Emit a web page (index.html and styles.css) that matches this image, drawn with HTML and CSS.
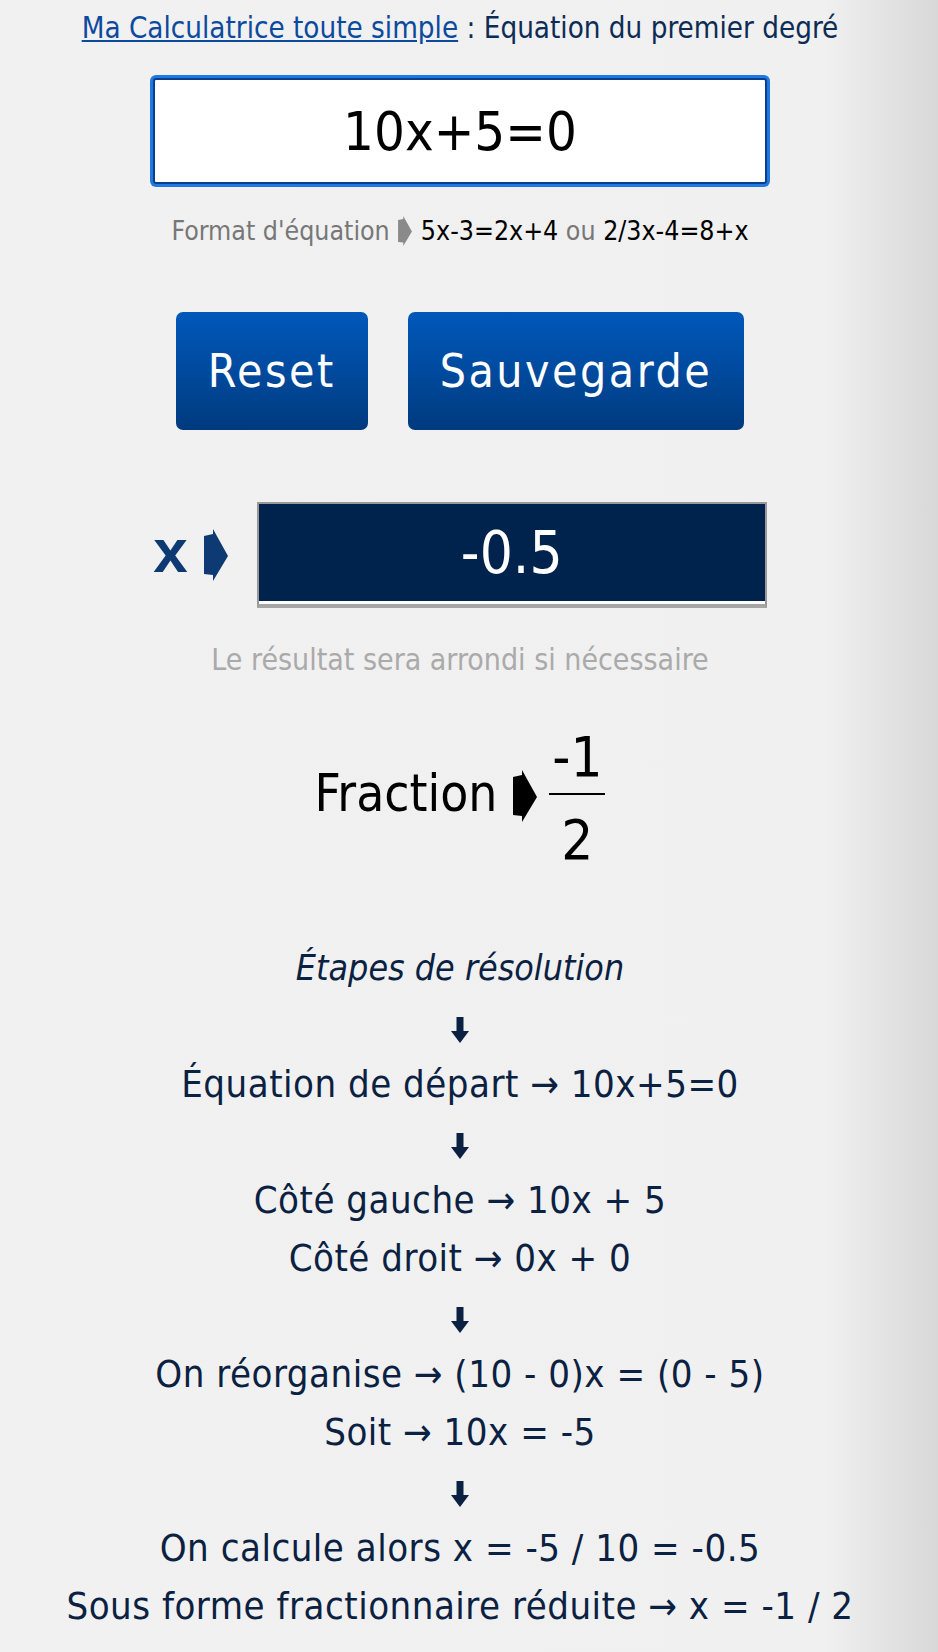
FILE: index.html
```html
<!DOCTYPE html>
<html>
    <head>
        <meta charset="utf-8">
        <title>Équation du premier degré</title>
        <link rel="stylesheet" href="styles.css">
    </head>
    <body>
        <div class="page">
            <h1 class="title"><a href="#">Ma Calculatrice toute simple</a> : Équation du premier degré</h1>

            <input class="equation" type="text" value="10x+5=0">

            <p class="format">
                Format d'équation
                <svg class="arrow arrow-small" viewBox="0 0 24 52"><polygon points="0,7 9,5 9,0 24,27 9,52 9,46 0,45"/></svg>
                <span class="sample">5x-3=2x+4</span> ou <span class="sample">2/3x-4=8+x</span>
            </p>

            <div class="buttons">
                <button class="btn">Reset</button>
                <button class="btn">Sauvegarde</button>
            </div>

            <div class="result-row">
                <span class="result-label">x</span>
                <svg class="arrow arrow-result" viewBox="0 0 24 52"><polygon points="0,7 9,5 9,0 24,27 9,52 9,46 0,45"/></svg>
                <div class="result-box">-0.5</div>
            </div>

            <p class="note">Le résultat sera arrondi si nécessaire</p>

            <div class="fraction-row">
                <span class="fraction-label">Fraction</span>
                <svg class="arrow arrow-fraction" viewBox="0 0 24 52"><polygon points="0,7 9,5 9,0 24,27 9,52 9,46 0,45"/></svg>
                <span class="fraction">
                    <span class="num">-1</span>
                    <span class="den">2</span>
                </span>
            </div>

            <h2 class="steps-title">Étapes de résolution</h2>

            <div class="steps">
                <svg class="down" viewBox="0 0 18 26"><polygon points="5.5,0 12.5,0 12.5,14 18,14 9,26 0,14 5.5,14"/></svg>
                <p>Équation de départ → 10x+5=0</p>

                <svg class="down" viewBox="0 0 18 26"><polygon points="5.5,0 12.5,0 12.5,14 18,14 9,26 0,14 5.5,14"/></svg>
                <p>Côté gauche → 10x + 5</p>
                <p>Côté droit → 0x + 0</p>

                <svg class="down" viewBox="0 0 18 26"><polygon points="5.5,0 12.5,0 12.5,14 18,14 9,26 0,14 5.5,14"/></svg>
                <p>On réorganise → (10 - 0)x = (0 - 5)</p>
                <p>Soit → 10x = -5</p>

                <svg class="down" viewBox="0 0 18 26"><polygon points="5.5,0 12.5,0 12.5,14 18,14 9,26 0,14 5.5,14"/></svg>
                <p>On calcule alors x = -5 / 10 = -0.5</p>
                <p>Sous forme fractionnaire réduite → x = -1 / 2</p>
            </div>
        </div>
    </body>
</html>
```

FILE: styles.css
```css
html, body {
    margin: 0;
    min-height: 100%;
}

body {
    font-family: "Liberation Sans Narrow", "DejaVu Sans Condensed", "Liberation Sans", sans-serif;
    background: linear-gradient(to right, #f1f1f1 0%, #f0f0f0 88%, #d8d8d8 100%);
    min-height: 1652px;
}

.page {
    width: 920px;
    text-align: center;
    padding-top: 8px;
}

.title {
    margin: 0;
    font-size: 29.3px;
    font-weight: normal;
    line-height: 40px;
    color: #0d2c55;
}

.title a {
    color: #0c4a9e;
    text-decoration: underline;
}

.equation {
    display: block;
    box-sizing: border-box;
    width: 614px;
    height: 106px;
    margin: 30px auto 0;
    border: 2px solid #0b3f8c;
    border-radius: 3px;
    box-shadow: 0 0 0 3px #1e7ae2;
    background: #fff;
    font-family: inherit;
    font-size: 54px;
    text-align: center;
    color: #000;
    outline: none;
}

.format {
    margin: 27px 0 0;
    font-size: 26.5px;
    line-height: 40px;
    color: #777;
}

.sample {
    color: #000;
}

.arrow {
    display: inline-block;
}

.arrow-small {
    width: 16px;
    height: 30px;
    fill: #8a8a8a;
    vertical-align: -6px;
}

.buttons {
    display: flex;
    justify-content: center;
    gap: 40px;
    margin-top: 61px;
}

.btn {
    height: 118px;
    padding: 0 32px;
    border: none;
    border-radius: 7px;
    background: linear-gradient(to bottom, #0058b9 0%, #004a9e 50%, #003a7e 100%);
    color: #fff;
    font-family: inherit;
    font-size: 46px;
    letter-spacing: 2.5px;
    cursor: pointer;
}

.result-row {
    display: flex;
    justify-content: center;
    align-items: center;
    margin-top: 72px;
}

.result-label {
    font-family: "Liberation Sans", sans-serif;
    font-weight: bold;
    font-size: 62px;
    line-height: 60px;
    color: #0d3a73;
    margin-top: -8px;
}

.arrow-result {
    width: 24px;
    height: 52px;
    fill: #0d3a73;
    margin: 0 29px 0 16px;
}

.result-box {
    box-sizing: border-box;
    width: 510px;
    height: 106px;
    border: 2px solid #999;
    border-bottom: 4px solid #a5a5a5;
    box-shadow: inset 0 -3px 0 #fff;
    background: #00234e;
    color: #fff;
    font-size: 58px;
    line-height: 98px;
}

.note {
    margin: 32px 0 0;
    font-size: 30px;
    line-height: 40px;
    color: #aaa;
}

.fraction-row {
    display: flex;
    justify-content: center;
    align-items: center;
    margin-top: 49px;
    color: #000;
}

.fraction-label {
    font-size: 51px;
    margin-top: -10px;
}

.arrow-fraction {
    width: 24px;
    height: 52px;
    fill: #000;
    margin: -6px 12px 0 16px;
}

.fraction {
    display: flex;
    flex-direction: column;
    align-items: center;
    font-size: 56px;
    line-height: 56px;
}

.num {
    width: 56px;
    padding-bottom: 8px;
    border-bottom: 2px solid #000;
}

.den {
    padding-top: 17px;
}

.steps-title {
    margin: 71px 0 0;
    font-size: 35.5px;
    font-weight: normal;
    font-style: italic;
    line-height: 58px;
    color: #0b2142;
}

.steps {
    color: #0b2142;
}

.down {
    display: block;
    width: 18px;
    height: 26px;
    margin: 20px auto 12px;
    fill: #0b2142;
}

.steps p {
    margin: 0;
    font-size: 38px;
    line-height: 58px;
    letter-spacing: 0.5px;
}
```
